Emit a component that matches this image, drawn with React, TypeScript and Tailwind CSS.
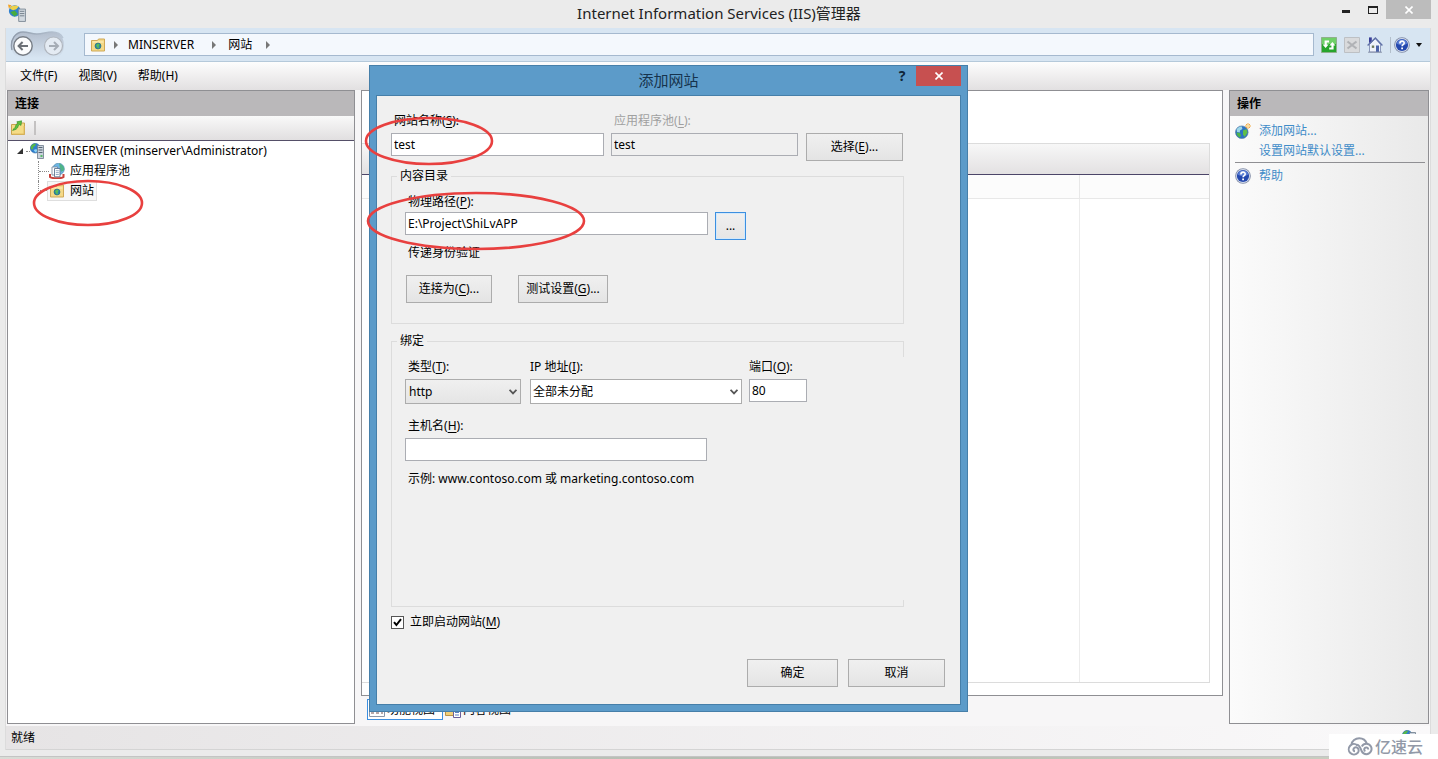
import React from "react";

type IconProps = { className?: string };

function ServerIcon({ className = "h-4 w-4" }: IconProps) {
  return (
    <svg viewBox="0 0 16 16" className={className} aria-hidden="true">
      <circle cx="5.2" cy="5.2" r="4.8" fill="#2f7fd0" stroke="#1d5c9c" strokeWidth="0.6" />
      <path d="M.8 4C1.6 1.4 4 .4 6 .8L5 3 3.4 4 3 6.4 1 6Z" fill="#58b848" />
      <path d="M3.6 7 6.4 6l1 2-2 1.6Z" fill="#8fd4f2" />
      <path d="M7.5 2.5h6v13h-6z" fill="#c9d2dc" stroke="#6d7b8a" strokeWidth="0.8" />
      <path d="M8.5 4.5h4M8.5 7h4M8.5 9.5h4" stroke="#566473" />
      <path d="M10.5 13h2" stroke="#3bb34a" strokeWidth="1.6" />
    </svg>
  );
}

function AppIcon({ className = "h-4 w-4" }: IconProps) {
  return (
    <svg viewBox="0 0 16 16" className={className} aria-hidden="true">
      <circle cx="6" cy="6.2" r="5.2" fill="#2f80cf" />
      <path d="M1.4 3.6C3.4 1.2 7 .8 9.6 2.2L7.4 4.6 4.6 5.6 3 4.8Z" fill="#eed24a" />
      <path d="M2 7.4l4-1.6 2.6 3-2.8 2.4Z" fill="#48ac3e" />
      <path d="M0 .4l3.2.6L.8 4Z" fill="#f4a321" />
      <path d="M9.5 4.5h6v11h-6z" fill="#d2d9e0" stroke="#7c8894" strokeWidth="0.8" />
      <path d="M10.5 6.5h4M10.5 8.5h4M10.5 10.5h4" stroke="#6b7885" strokeWidth="0.8" />
    </svg>
  );
}

function SitesIcon({ className = "h-4 w-4" }: IconProps) {
  return (
    <svg viewBox="0 0 16 16" className={className} aria-hidden="true">
      <path d="M1.5 3.5h6l1-1.5h6v12h-13z" fill="#f4d987" stroke="#cfa856" />
      <path d="M2.5 5h11" stroke="#fff2c2" />
      <circle cx="8" cy="9" r="3" fill="#2d86a4" stroke="#1c6a7c" strokeWidth="0.6" />
      <path d="M6 8.2 8 6.6l1.6 1L8.6 9.6 9 11.4 7.2 10.6Z" fill="#5bc053" />
    </svg>
  );
}

function PoolIcon({ className = "h-4 w-4" }: IconProps) {
  return (
    <svg viewBox="0 0 16 16" className={className} aria-hidden="true">
      <circle cx="9.5" cy="6" r="5.8" fill="#6cb4e4" stroke="#34799f" strokeWidth="0.6" />
      <path d="M10 .6c3 .6 5.4 3 5.2 6.4L12.4 9 11 5Z" fill="#4fb487" />
      <path d="M1 11v3c2 1.6 11.5 1.8 13.5 0V11" fill="none" stroke="#c8413b" strokeWidth="2" />
      <path d="M3 4h5.5v8H3z" fill="#fff" stroke="#7b8ca0" strokeWidth="0.9" />
      <path d="M5.5 5.5h5.5v8.3H5.5z" fill="#fff" stroke="#5d7592" strokeWidth="0.9" />
      <path d="M6.8 7.7h3M6.8 9.6h3M6.8 11.5h3" stroke="#7896b8" strokeWidth="0.8" />
    </svg>
  );
}

function GlobeNewIcon({ className = "h-4 w-4" }: IconProps) {
  return (
    <svg viewBox="0 0 16 16" className={className} aria-hidden="true">
      <circle cx="6.8" cy="9.2" r="6.3" fill="#2d74c4" stroke="#53779c" strokeWidth="0.6" />
      <path d="M1.6 6.5C3.1 4 5.1 3.4 6.8 3.6L7.4 6 5 7.5 4.8 9.5 2 9Z" fill="#9fd8e8" />
      <path d="M1.6 9.5l3.4.5 1 2.4-1 2.2C3 13.8 1.6 12 1.6 9.5Z" fill="#4fb648" />
      <path d="M8 7.5l3.5-1.6 1 3.6L9.8 14 8 11.6Z" fill="#5fbf48" />
      <path d="M13 0v6M10 3h6M11 1l4 4M15 1l-4 4" stroke="#f0a030" strokeWidth="0.9" />
      <circle cx="13" cy="3" r="1.1" fill="#fff0b0" />
    </svg>
  );
}

function HelpIcon({ className = "h-4 w-4" }: IconProps) {
  return (
    <svg viewBox="0 0 16 16" className={className} aria-hidden="true">
      <circle cx="8" cy="8" r="7.8" fill="#7f8aa4" />
      <circle cx="8" cy="8" r="7" fill="#d3dbec" />
      <circle cx="8" cy="8" r="6.1" fill="#2549ae" />
      <path d="M2.8 6.5a5.4 5.4 0 0 1 10.4 0C10 8.5 6 8.5 2.8 6.5Z" fill="#5b7fd4" />
      <path
        d="M5.9 6.4c0-3 4.3-2.9 4.3-.4 0 1.7-2.1 1.7-2.1 3.3"
        fill="none"
        stroke="#fff"
        strokeWidth="1.6"
      />
      <path d="M7.2 10.6h1.8v1.7H7.2z" fill="#fff" />
    </svg>
  );
}

function RefreshIcon() {
  return (
    <svg viewBox="0 0 16 16" className="h-4 w-4" aria-hidden="true">
      <path d="M.5.5h15v15H.5z" fill="#27a52c" stroke="#8fb08c" />
      <path d="M1 1h14v6H1z" fill="#6fd068" />
      <path d="M1.6 7.6 4.6 11 7.6 7.6H5.8V5.4H8V3.6H3.6v4Z" fill="#fff" />
      <path d="M8.4 8.4 11.4 5l3 3.4h-1.8v4H8.2v-1.8h2.2V8.4Z" fill="#fff" />
    </svg>
  );
}

function StopIcon() {
  return (
    <svg viewBox="0 0 16 16" className="h-4 w-4" aria-hidden="true">
      <path d="M.5.5h15v15H.5z" fill="#d9dadc" stroke="#bdc0c4" />
      <path d="M3.5 4.5l9 7M12.5 4.5l-9 7" stroke="#b0b2b6" strokeWidth="2.2" />
    </svg>
  );
}

function HomeIcon() {
  return (
    <svg viewBox="0 0 16 16" className="h-4 w-4" aria-hidden="true">
      <path d="M2 .4h2.8v5.4H2z" fill="#3a3f98" />
      <path d="M2.5 7.5 8.4 1.6l5.1 5.9V15h-11z" fill="#eef2fa" stroke="#7684ac" strokeWidth="0.8" />
      <path d="M.6 8.4 8.4 1l7 7.4" fill="none" stroke="#5f70a8" strokeWidth="1.4" />
      <path d="M9 8.5h3V15H9z" fill="#4b63a8" />
      <path d="M4.8 8.5h2.4v2.4H4.8z" fill="#6c7a5c" />
      <path d="M1 15.2h14" stroke="#8a94ac" />
    </svg>
  );
}

function ConnectIcon() {
  return (
    <svg viewBox="0 0 16 16" className="h-4 w-4" aria-hidden="true">
      <path d="M1.5 4.5h5l1-1.5h7v11.5h-13z" fill="#f5dc86" stroke="#c9a450" />
      <path d="M2.5 14h11.5V6" fill="none" stroke="#e2bd62" />
      <path
        d="M2.6 10.4C3 9 5 8.4 5.4 6.6 5.6 5 6.6 4 8 3.4L6.8 1.8 11.6.8 11 5.4 9.6 4.6C8 5.4 8.2 7 7.4 8 6 9.8 4.6 9.8 2.6 10.4Z"
        fill="#5fc140"
        stroke="#2e8a26"
        strokeWidth="0.6"
      />
    </svg>
  );
}

// back / forward pair sitting in the curved navigation plate
function NavButtons() {
  return (
    <svg viewBox="0 0 56 28" className="h-7 w-14" aria-hidden="true">
      <defs>
        <linearGradient id="plate" x1="0" y1="0" x2="0" y2="1">
          <stop offset="0" stopColor="#b3becd" />
          <stop offset="1" stopColor="#d7e5f2" />
        </linearGradient>
        <linearGradient id="plate-edge" x1="0" y1="0" x2="1" y2="0">
          <stop offset="0" stopColor="#8f9bab" />
          <stop offset="1" stopColor="#b9c6d5" />
        </linearGradient>
      </defs>
      <path d="M1 14C1 5 7 1 13 1c6 0 8 2 14 2s9-2 15-2 12 4 12 13-5 13-12 13H13C6 27 1 22 1 14Z" fill="url(#plate)" />
      <path
        d="M2 19C-.5 8 6 1 13 1c6 0 8 2 14 2s9-2 15-2 9 2 11 6"
        fill="none"
        stroke="url(#plate-edge)"
        strokeWidth="1.4"
      />
      <circle cx="13" cy="15" r="9.2" fill="#fbfcfd" stroke="#767c84" strokeWidth="1.4" />
      <path d="M18 15H9M12.6 11 8.6 15l4 4" fill="none" stroke="#6b7077" strokeWidth="2" />
      <circle cx="43.5" cy="15" r="9" fill="#e4ebf3" stroke="#b0b6be" strokeWidth="1.2" />
      <path d="M39 15h9M44 11l4 4-4 4" fill="none" stroke="#a6adb6" strokeWidth="2" />
    </svg>
  );
}

function CrumbArrow() {
  return (
    <svg viewBox="0 0 4 8" className="h-2 w-1" aria-hidden="true">
      <path d="M0 0l4 4-4 4Z" fill="#777" />
    </svg>
  );
}

function Chevron() {
  return (
    <svg viewBox="0 0 8 6" className="pointer-events-none absolute right-1 top-2.5 h-1.5 w-2" aria-hidden="true">
      <path d="M.6.8 4 4.4 7.4.8" fill="none" stroke="#555" strokeWidth="1.7" />
    </svg>
  );
}

function Ring({ className, w, h }: { className: string; w: number; h: number }) {
  return (
    <svg
      viewBox={`0 0 ${w} ${h}`}
      width={w}
      height={h}
      className={`pointer-events-none absolute z-10 max-w-none ${className}`}
      aria-hidden="true"
    >
      <ellipse cx={w / 2} cy={h / 2} rx={w / 2 - 2} ry={h / 2 - 2} fill="none" stroke="#e8403f" strokeWidth="2.6" />
    </svg>
  );
}

function Key({ text, k, tail = ":" }: { text: string; k: string; tail?: string }) {
  return (
    <>
      {text}(<span className="underline underline-offset-2">{k}</span>){tail}
    </>
  );
}

function DialogButton({ className, children }: { className: string; children: React.ReactNode }) {
  return (
    <button
      type="button"
      className={`h-7 border border-[#acacac] bg-linear-to-b from-[#f0f0f0] to-[#e4e4e4] ${className}`}
    >
      {children}
    </button>
  );
}

const textBox = "h-[23px] border border-[#abadb3] bg-white px-0.5";

function AddSiteDialog() {
  return (
    <div
      role="dialog"
      aria-labelledby="dialog-title"
      className="absolute left-[369px] top-[65px] z-20 w-[599px] border border-[#467fa9] bg-[#5c9bc9] px-1.5 pb-1.5"
    >
      <div className="grid h-[29px] grid-cols-[1fr_auto_1fr]">
        <h2 id="dialog-title" className="col-start-2 pt-1 text-[15px] leading-5 text-[#16334d]">
          添加网站
        </h2>
        <div className="flex items-start justify-end">
          <button type="button" aria-label="帮助" className="h-5 w-7 text-sm font-bold text-[#0f2538]">
            ?
          </button>
          <button type="button" aria-label="关闭" className="flex h-5 w-[45px] items-center justify-center bg-[#c75050]">
            <svg viewBox="0 0 8 8" className="h-2 w-2">
              <path d="M.5.5l7 7M7.5.5l-7 7" stroke="#fff" strokeWidth="1.6" />
            </svg>
          </button>
        </div>
      </div>

      <form className="border border-[#467fa9] bg-[#f0f0f0] px-3.5 pb-[17px] pt-[17px]">
        <div className="flex items-end">
          <div className="flex flex-col gap-1 pb-[5px]">
            <label htmlFor="site" className="pl-[3px]">
              <Key text="网站名称" k="S" />
            </label>
            <input id="site" defaultValue="test" className={`w-[213px] ${textBox}`} />
          </div>
          <div className="ml-[7px] flex flex-col gap-1 pb-[5px]">
            <label htmlFor="pool" className="pl-[3px] text-[#a0a0a0]">
              <Key text="应用程序池" k="L" />
            </label>
            <input
              id="pool"
              readOnly
              value="test"
              className="h-[23px] w-[187px] border border-[#abadb3] bg-[#f0f0f0] px-0.5"
            />
          </div>
          <DialogButton className="ml-2 w-[97px]">
            <Key text="选择" k="E" tail="..." />
          </DialogButton>
        </div>

        <fieldset className="mt-[7px] w-[513px] border border-[#dcdcdc] px-[13px] pb-5">
          <legend className="-ml-2 px-[3px]">内容目录</legend>
          <div className="pt-2.5">
            <label htmlFor="path" className="block pl-[3px]">
              <Key text="物理路径" k="P" />
            </label>
            <div className="mt-0.5 flex items-start gap-[7px]">
              <input id="path" defaultValue="E:\Project\ShiLvAPP" className={`w-[303px] ${textBox}`} />
              <button
                type="button"
                aria-label="浏览"
                className="h-7 w-[31px] border border-[#3c8fe0] bg-linear-to-b from-[#f0f0f0] to-[#e5e5e5] shadow-[inset_0_0_0_1px_#d3e9fb]"
              >
                ...
              </button>
            </div>
            <p className="mt-[5px] pl-[3px]">传递身份验证</p>
            <div className="mt-3.5 flex gap-[26px] pl-px">
              <DialogButton className="w-[86px]">
                <Key text="连接为" k="C" tail="..." />
              </DialogButton>
              <DialogButton className="w-[90px]">
                <Key text="测试设置" k="G" tail="..." />
              </DialogButton>
            </div>
          </div>
        </fieldset>

        <fieldset className="relative mt-[9px] w-[513px] border border-[#dcdcdc] px-[13px] pb-[119px]">
          <legend className="-ml-2 px-[3px]">绑定</legend>
          {/* right edge is only drawn at the corners */}
          <span className="absolute -right-px bottom-1.5 top-2 w-px bg-[#f0f0f0]" />
          <div className="flex items-start pt-2.5">
            <div className="flex flex-col gap-1">
              <label htmlFor="type" className="pl-[3px]">
                <Key text="类型" k="T" />
              </label>
              <div className="relative">
                <select
                  id="type"
                  className="block h-[25px] w-[116px] appearance-none border border-[#acacac] bg-linear-to-b from-[#f0f0f0] to-[#e5e5e5] pl-[3px]"
                >
                  <option>http</option>
                </select>
                <Chevron />
              </div>
            </div>
            <div className="ml-[9px] flex flex-col gap-1">
              <label htmlFor="ip">
                <Key text="IP 地址" k="I" />
              </label>
              <div className="relative">
                <select
                  id="ip"
                  className="block h-[25px] w-[212px] appearance-none border border-[#acacac] bg-white pl-0.5"
                >
                  <option>全部未分配</option>
                </select>
                <Chevron />
              </div>
            </div>
            <div className="ml-[7px] flex flex-col gap-1">
              <label htmlFor="port">
                <Key text="端口" k="O" />
              </label>
              <input id="port" defaultValue="80" className={`w-[58px] ${textBox}`} />
            </div>
          </div>
          <div className="mt-3.5 flex flex-col gap-1">
            <label htmlFor="host" className="pl-[3px]">
              <Key text="主机名" k="H" />
            </label>
            <input id="host" className={`w-[302px] ${textBox}`} />
          </div>
          <p className="mt-2.5 pl-[3px]">示例: www.contoso.com 或 marketing.contoso.com</p>
        </fieldset>

        <label className="mt-[7px] flex items-center gap-1.5">
          <span className="relative flex">
            <input
              type="checkbox"
              defaultChecked
              className="peer h-[13px] w-[13px] appearance-none border border-[#555] bg-white"
            />
            <svg
              viewBox="0 0 13 13"
              className="pointer-events-none absolute inset-0 hidden h-[13px] w-[13px] peer-checked:block"
            >
              <path d="M3 6.2 5.4 9 10 3.2" fill="none" stroke="#000" strokeWidth="2" />
            </svg>
          </span>
          <span>
            <Key text="立即启动网站" k="M" tail="" />
          </span>
        </label>

        <div className="mt-[29px] flex justify-end gap-2.5 pr-px">
          <DialogButton className="w-[91px]">确定</DialogButton>
          <DialogButton className="w-[97px]">取消</DialogButton>
        </div>
      </form>

      <Ring className="-left-1.5 top-[50px]" w={130} h={50} />
      <Ring className="-left-1 top-[125px]" w={220} h={60} />
    </div>
  );
}

function TitleBar() {
  return (
    <header className="grid h-7 grid-cols-[1fr_auto_1fr]">
      <AppIcon className="ml-2 mt-1 h-[18px] w-[18px]" />
      <h1 className="pt-[3px] text-[15px] leading-5 text-[#222]">Internet Information Services (IIS)管理器</h1>
      <div className="flex items-start justify-end pr-[7px]">
        <button type="button" aria-label="最小化" className="flex h-[19px] w-[27px] items-center justify-center">
          <span className="mt-1 h-[3px] w-2 bg-[#222]" />
        </button>
        <button type="button" aria-label="最大化" className="flex h-[19px] w-[27px] items-center justify-center">
          <span className="h-2 w-2.5 border border-t-2 border-[#222]" />
        </button>
        <button type="button" aria-label="关闭" className="flex h-[19px] w-[45px] items-center justify-center bg-[#bcbcbc]">
          <svg viewBox="0 0 8 8" className="h-2 w-2">
            <path d="M.5.5l7 7M7.5.5l-7 7" stroke="#fff" strokeWidth="1.6" />
          </svg>
        </button>
      </div>
    </header>
  );
}

function AddressBar() {
  return (
    <div className="flex h-[34px] items-center border-b border-[#b5c9da] bg-[#d7e5f2] pl-1">
      <NavButtons />
      <nav className="ml-[18px] flex h-[23px] flex-1 items-center border border-[#a5b9cf] bg-[#f4f8fd] pl-[5px]">
        <SitesIcon />
        <span className="ml-2 mr-2.5">
          <CrumbArrow />
        </span>
        <a href="#server">MINSERVER</a>
        <span className="ml-[18px] mr-3">
          <CrumbArrow />
        </span>
        <a href="#sites">网站</a>
        <span className="ml-3.5">
          <CrumbArrow />
        </span>
      </nav>
      <div className="flex items-center gap-[7px] pl-[7px] pr-2">
        <button type="button" aria-label="刷新">
          <RefreshIcon />
        </button>
        <button type="button" aria-label="停止">
          <StopIcon />
        </button>
        <button type="button" aria-label="主页">
          <HomeIcon />
        </button>
        <span className="h-4 w-px bg-[#b3bfcb]" />
        <button type="button" aria-label="帮助" className="-ml-1 flex items-center gap-1.5">
          <HelpIcon />
          <svg viewBox="0 0 6 4" className="h-1 w-1.5">
            <path d="M0 0h6L3 4Z" fill="#111" />
          </svg>
        </button>
      </div>
    </div>
  );
}

function ConnectionsPanel() {
  return (
    <aside className="flex w-[348px] flex-col border border-[#8f8f93] bg-white">
      <h2 className="flex h-[25px] items-center bg-[#bab8ba] pl-[7px] font-bold">连接</h2>
      <div className="flex h-[25px] items-center gap-2 border-b border-[#554f68] bg-linear-to-b from-[#f9f9f9] to-[#e1dfe0] pl-0.5">
        <button type="button" aria-label="创建新连接">
          <ConnectIcon />
        </button>
        <span className="h-3.5 w-0.5 bg-[#c4c2c2]" />
      </div>
      <ul className="relative">
        <li>
          <div className="flex h-5 items-center pl-2">
            <svg viewBox="0 0 8 8" className="h-2 w-2">
              <path d="M7 1v6H1Z" fill="#333" />
            </svg>
            <span className="ml-0.5 w-1 border-t border-dotted border-[#888]" />
            <ServerIcon />
            <span className="ml-[5px]">MINSERVER (minserver\Administrator)</span>
          </div>
          <ul className="ml-[30px] flex flex-col">
            <li className="flex h-5 items-center border-l border-dotted border-[#888]">
              <span className="w-2.5 border-t border-dotted border-[#888]" />
              <PoolIcon />
              <span className="ml-[5px]">应用程序池</span>
            </li>
            <li className="flex h-5 items-start">
              <span className="h-2.5 w-[9px] border-b border-l border-dotted border-[#888]" />
              <span className="flex h-5 items-center gap-[5px] border border-[#dedede] bg-[#f7f7f7] pl-px pr-0.5">
                <SitesIcon />
                网站
              </span>
            </li>
          </ul>
        </li>
        <Ring className="left-6 top-[38px]" w={112} h={48} />
      </ul>
    </aside>
  );
}

function FeatureView() {
  return (
    <main className="flex flex-1 flex-col">
      <div className="flex flex-1 flex-col border border-[#8f8f93] bg-white pb-3 pr-3 pt-[52px]">
        <div className="flex flex-1 flex-col border border-l-0 border-[#dcdcdc]">
          <div className="h-[31px] border-b border-[#4c4568] bg-linear-to-b from-[#f7f7f7] to-[#e3e1e2]" />
          <div className="flex flex-1 flex-col">
            <div className="flex h-6 border-b border-[#e8e8e8] bg-[#fcfcfc]">
              <span className="flex-1" />
              <span className="w-[130px] border-l border-[#e8e8e8]" />
            </div>
            <div className="flex flex-1">
              <span className="flex-1" />
              <span className="w-[130px] border-l border-[#ececec]" />
            </div>
          </div>
        </div>
      </div>
      <div className="flex h-7 items-center gap-0.5 pb-1 pl-1.5 pt-[3px]">
        <button type="button" className="flex h-[21px] w-[76px] items-center gap-0.5 border border-[#3c8fe0] bg-white pl-px">
          <svg viewBox="0 0 16 16" className="h-4 w-4">
            <path d="M.5 2.5h15v12H.5z" fill="#fff" stroke="#8c97a8" />
            <path d="M2 9h3v3H2zM7 9h3v3H7zM12 9h2v3h-2z" fill="#b8a8a8" />
          </svg>
          功能视图
        </button>
        <button type="button" className="flex h-[21px] items-center gap-0.5">
          <svg viewBox="0 0 16 16" className="h-4 w-4">
            <path d="M.5 3.5h9v10h-9z" fill="#f0cf7a" stroke="#b99349" />
            <path d="M8.5 5.5h7v10h-7z" fill="#fff" stroke="#6b5f9a" />
            <path d="M10 8h4M10 10.5h4M10 13h4" stroke="#5d7fc0" />
          </svg>
          内容视图
        </button>
      </div>
    </main>
  );
}

function ActionsPanel() {
  return (
    <aside className="flex w-[200px] flex-col border border-[#8f8f93] bg-linear-to-r from-[#fbfbfb] to-[#e9e9e9]">
      <h2 className="flex h-[25px] items-center bg-[#bab8ba] pl-[7px] font-bold">操作</h2>
      <div className="flex flex-col pl-[5px] pr-[3px] pt-[5px] text-[#3f8cc8]">
        <a href="#add" className="flex h-5 items-center gap-2">
          <GlobeNewIcon />
          添加网站...
        </a>
        <a href="#defaults" className="flex h-5 items-center pl-6">
          设置网站默认设置...
        </a>
        <hr className="mb-[3px] mt-px border-[#8f8f93]" />
        <a href="#help" className="flex h-5 items-center gap-2">
          <HelpIcon />
          帮助
        </a>
      </div>
    </aside>
  );
}

function Watermark() {
  return (
    <div className="absolute bottom-0 right-0 z-30 flex h-[25px] w-[109px] items-center gap-0.5 bg-white pl-[18px] text-[#9299a8]">
      <svg viewBox="0 0 26 19" className="h-[19px] w-[26px]" fill="none" stroke="currentColor" strokeWidth="2">
        <path d="M4.6 7.4C4.8 3.8 8.4 1.2 12.2 1.2c3.8 0 6.6 2.2 7.6 5.4" />
        <path d="M10.4 8.4A5.2 5.2 0 1 0 10.6 16c1.6-1.6 1.4-4.4-.4-5.4-1.8-.9-3.8.2-3.8 2 0 1 .7 1.7 1.6 1.7" />
        <path d="M10 7.6c3.4.8 3.4 4 4.6 6.4 1 2 2.6 3.2 4.8 3.2a5.2 5.2 0 1 0-4.6-7.8" />
        <path d="M18.4 14.2c-1.4-.6-1.6-2.6-.4-3.4 1.4-.9 3.2 0 3.2 1.6" />
      </svg>
      <span className="text-base font-medium leading-6">亿速云</span>
    </div>
  );
}

export default function App() {
  return (
    <div className="relative flex min-h-screen flex-col overflow-hidden bg-[#ebebeb] font-['Noto_Sans','Noto_Sans_CJK_SC',sans-serif] text-xs leading-4 text-black">
      <TitleBar />
      <div className="ml-[5px] mr-[7px] flex flex-1 flex-col border-x border-[#dcdcdc] bg-[#f7f6f7]">
        <AddressBar />
        <nav className="flex h-7 items-center gap-[21px] bg-linear-to-b from-[#fdfdfd] to-[#e2e0e1] pl-3.5">
          <button type="button">文件(F)</button>
          <button type="button">视图(V)</button>
          <button type="button">帮助(H)</button>
        </nav>
        <div className="flex flex-1 gap-1.5 px-px pb-0.5">
          <ConnectionsPanel />
          <FeatureView />
          <ActionsPanel />
        </div>
        <footer className="flex h-6 items-center justify-between border-b border-[#d4d4d4] bg-linear-to-r from-[#e6e4e5] to-[#faf9fa] pl-[5px] pr-3">
          <span>就绪</span>
          <ServerIcon />
        </footer>
      </div>
      <div className="mt-1.5 h-[3px] border-t border-[#c4c4c4] bg-linear-to-r from-[#d9dcd6] via-[#b3bbb0] to-[#cbd0c2]" />
      <AddSiteDialog />
      <Watermark />
    </div>
  );
}
